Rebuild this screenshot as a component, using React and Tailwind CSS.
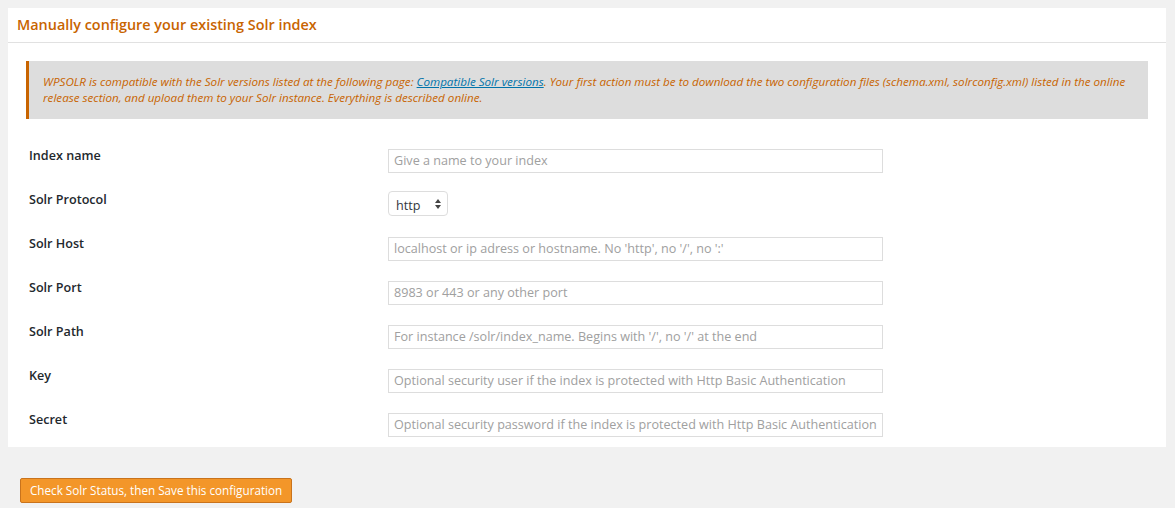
import { useState } from "react";

const fields = [
  { label: "Index name", placeholder: "Give a name to your index" },
  { label: "Solr Protocol", select: true },
  { label: "Solr Host", placeholder: "localhost or ip adress or hostname. No 'http', no '/', no ':'" },
  { label: "Solr Port", placeholder: "8983 or 443 or any other port" },
  { label: "Solr Path", placeholder: "For instance /solr/index_name. Begins with '/', no '/' at the end" },
  { label: "Key", placeholder: "Optional security user if the index is protected with Http Basic Authentication" },
  { label: "Secret", placeholder: "Optional security password if the index is protected with Http Basic Authentication" },
];

function App() {
  const [protocol, setProtocol] = useState("http");

  return (
    <div className="min-h-[508px] bg-[#f1f1f1] pt-2 pl-2 pr-[9px] font-['Open_Sans',sans-serif]">
      <div className="bg-white">
        {/* Header */}
        <div className="h-[35px] border-b border-[#e1e1e1] px-[9px] flex items-center">
          <h2 className="text-[14.4px] font-semibold text-[#c86400] leading-none">
            Manually configure your existing Solr index
          </h2>
        </div>

        {/* Notice */}
        <div className="mx-[18px] mt-[18px] bg-[#dddddd] border-l-[3px] border-[#c86400] pl-[14px] pr-4 py-[13px]">
          <p className="text-[11.65px] italic leading-[16px] text-[#c86400] whitespace-nowrap">
            WPSOLR is compatible with the Solr versions listed at the following page:{" "}
            <a href="#" className="text-[#0073aa] underline">
              Compatible Solr versions
            </a>
            . Your first action must be to download the two configuration files (schema.xml, solrconfig.xml) listed in the online
            <br />
            release section, and upload them to your Solr instance. Everything is described online.
          </p>
        </div>

        {/* Form */}
        <div className="mt-[19px] pb-px">
          {fields.map((f) => (
            <div key={f.label} className="flex h-[44px]">
              <div className="w-[380px] pl-[21px] pt-[9px] text-[12.6px] font-semibold text-[#23282d] leading-[17px]">
                {f.label}
              </div>
              <div className="pt-[9px]">
                {f.select ? (
                  <div className="relative w-[60px] h-[25px] border border-[#dddddd] rounded-[4px] bg-white">
                    <select
                      value={protocol}
                      onChange={(e) => setProtocol(e.target.value)}
                      className="appearance-none w-full h-full bg-transparent pl-[7px] text-[12.6px] text-[#32373c] outline-none"
                    >
                      <option value="http">http</option>
                      <option value="https">https</option>
                    </select>
                    <svg
                      className="absolute right-[6px] top-[7px] pointer-events-none"
                      width="6"
                      height="10"
                      viewBox="0 0 6 10"
                    >
                      <path d="M3 0 L6 4 L0 4 Z" fill="#444" />
                      <path d="M0 6 L6 6 L3 10 Z" fill="#444" />
                    </svg>
                  </div>
                ) : (
                  <input
                    type="text"
                    placeholder={f.placeholder}
                    className="w-[495px] h-[24px] border border-[#dddddd] px-[5px] text-[12.6px] text-[#32373c] placeholder:text-[#a0a0a0] outline-none"
                  />
                )}
              </div>
            </div>
          ))}
        </div>
      </div>

      <div className="pt-[30px] pl-3">
        <button className="h-[25px] px-[9px] bg-[#f39629] border border-[#c9731c] rounded-[2px] text-white text-[11.7px] leading-none">
          Check Solr Status, then Save this configuration
        </button>
      </div>
    </div>
  );
}

export default App;
